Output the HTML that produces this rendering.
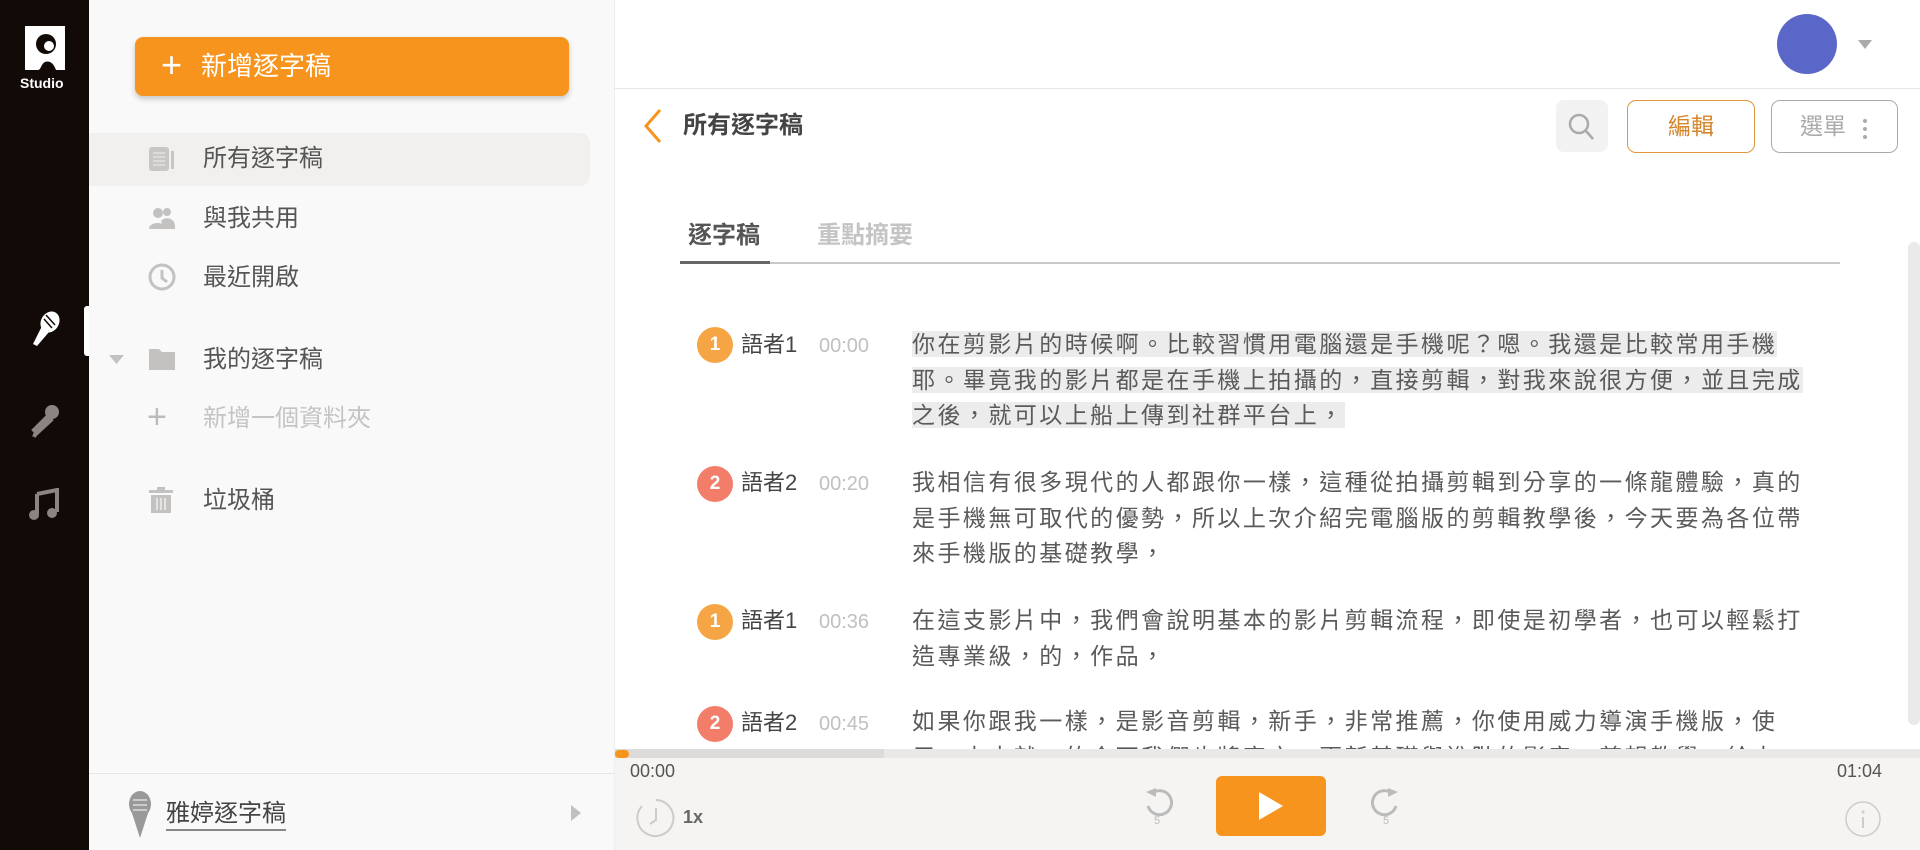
<!DOCTYPE html>
<html><head><meta charset="utf-8"><style>
*{margin:0;padding:0;box-sizing:border-box}
body{width:1920px;height:850px;overflow:hidden;position:relative;background:#fff;font-family:"Liberation Sans","Noto Sans CJK TC",sans-serif;color:#555}
.abs{position:absolute}
#rail{left:0;top:0;width:89px;height:850px;background:#120a06}
#side{left:89px;top:0;width:526px;height:850px;background:#f9f9f9;border-right:1px solid #eee}
.nav{position:absolute;left:203px;font-size:24px;color:#555;line-height:30px}
.tx{position:absolute;left:912px;font-size:23px;letter-spacing:2.45px;line-height:35.5px;color:#5a5a5a;white-space:nowrap}
.hl span{background:#ececec}
.badge{position:absolute;left:697px;width:36px;height:36px;border-radius:50%;color:#fff;font-size:19px;font-weight:bold;text-align:center;line-height:36px}
.spk{position:absolute;left:741px;font-size:22px;color:#444;line-height:30px}
.tm{position:absolute;left:819px;font-size:20px;color:#c0c0c0;line-height:30px}
</style></head><body>
<div id="rail" class="abs">
 <svg class="abs" style="left:22px;top:24px" width="46" height="48" viewBox="0 0 46 48"><path d="M3 2h40v44h-9c-2-6-6-10-11-8-4 2-4 8-7 8H3z" fill="#fff"/><circle cx="24" cy="20" r="10" fill="#120a06"/><circle cx="27" cy="22" r="5" fill="#fff"/></svg>
 <div class="abs" style="left:20px;top:75px;color:#fff;font-size:14px;font-weight:bold">Studio</div>
 <div class="abs" style="left:84px;top:306px;width:5px;height:50px;background:#fff;border-radius:3px 0 0 3px"></div>
 <svg class="abs" style="left:30px;top:310px" width="32" height="38" viewBox="0 0 32 38"><ellipse cx="20" cy="12" rx="9" ry="11" fill="#fff" transform="rotate(30 20 12)"/><path d="M12 16l-9 18 4 2 12-14z" fill="#fff"/><path d="M16 5l9 10M14 9l8 9" stroke="#120a06" stroke-width="1.5"/></svg>
 <svg class="abs" style="left:28px;top:402px" width="34" height="36" viewBox="0 0 34 36"><circle cx="24" cy="10" r="7" fill="#8a8580"/><path d="M20 14l-14 14 3 3 14-13zM9 28l-3 7" stroke="#8a8580" stroke-width="4" fill="#8a8580"/></svg>
 <svg class="abs" style="left:27px;top:488px" width="34" height="34" viewBox="0 0 34 34"><path d="M10 6l20-4v22" stroke="#8a8580" stroke-width="4" fill="none"/><path d="M10 6v20" stroke="#8a8580" stroke-width="4"/><circle cx="7" cy="27" r="5" fill="#8a8580"/><circle cx="25" cy="25" r="5" fill="#8a8580"/></svg>
</div>
<div id="side" class="abs"></div>
<div class="abs" style="left:135px;top:37px;width:434px;height:59px;background:#f7941d;border-radius:8px;box-shadow:0 3px 6px rgba(0,0,0,.2);color:#fff;font-size:26px;line-height:59px"><span style="position:absolute;left:26px;font-size:36px;top:-2px">+</span><span style="position:absolute;left:66px">新增逐字稿</span></div>
<div class="abs" style="left:89px;top:133px;width:501px;height:53px;background:#f1f0ee;border-radius:0 10px 10px 0"></div>
<svg class="abs" style="left:147px;top:145px" width="30" height="28"><rect x="2" y="2" width="20" height="24" rx="3" fill="#c9c7c5"/><rect x="24" y="6" width="3" height="18" fill="#c9c7c5"/><path d="M6 8h12M6 12h12M6 16h12M6 20h12" stroke="#e6e5e3" stroke-width="1.3"/></svg>
<div class="nav" style="top:144px">所有逐字稿</div>
<svg class="abs" style="left:148px;top:205px" width="28" height="26"><circle cx="10" cy="8" r="5" fill="#c4c2c0"/><circle cx="19" cy="7" r="4" fill="#c4c2c0"/><path d="M1 24c0-8 18-8 18 0zM13 16c4-5 14-3 14 5v3h-10z" fill="#c4c2c0"/></svg>
<div class="nav" style="top:204px">與我共用</div>
<svg class="abs" style="left:147px;top:262px" width="30" height="30"><circle cx="15" cy="15" r="12" stroke="#c4c2c0" stroke-width="3" fill="none"/><path d="M15 8v8l5 4" stroke="#c4c2c0" stroke-width="3" fill="none"/></svg>
<div class="nav" style="top:263px">最近開啟</div>
<svg class="abs" style="left:108px;top:354px" width="18" height="12"><path d="M1 1h15l-7.5 9z" fill="#c4c2c0"/></svg>
<svg class="abs" style="left:147px;top:345px" width="30" height="28"><path d="M2 4h10l3 3h13v18H2z" fill="#c4c2c0" rx="3"/></svg>
<div class="nav" style="top:345px">我的逐字稿</div>
<div class="abs" style="left:147px;top:400px;font-size:34px;color:#bbb;line-height:34px">+</div>
<div class="nav" style="top:404px;color:#c4c4c4">新增一個資料夾</div>
<svg class="abs" style="left:147px;top:485px" width="30" height="30"><rect x="2" y="5" width="24" height="3" fill="#c4c2c0"/><rect x="10" y="2" width="8" height="4" fill="#c4c2c0"/><path d="M4 10h20v18H4z" fill="#c4c2c0"/><path d="M10 13v12M14 13v12M18 13v12" stroke="#eee" stroke-width="1.5"/></svg>
<div class="nav" style="top:486px">垃圾桶</div>
<div class="abs" style="left:89px;top:773px;width:526px;height:1px;background:#e6e6e6"></div>
<svg class="abs" style="left:125px;top:790px" width="30" height="50"><ellipse cx="15" cy="14" rx="11" ry="13" fill="#999"/><path d="M6 20l9 28 9-28z" fill="#999"/><path d="M8 10h14M8 15h14M8 20h14" stroke="#ddd" stroke-width="1.5"/></svg>
<div class="abs" style="left:166px;top:799px;font-size:24px;color:#444;border-bottom:2px solid #888;line-height:30px">雅婷逐字稿</div>
<svg class="abs" style="left:570px;top:804px" width="12" height="18"><path d="M1 1l10 8-10 8z" fill="#c0c0c0"/></svg>
<!-- header -->
<div class="abs" style="left:615px;top:88px;width:1305px;height:1px;background:#e6e6e6"></div>
<div class="abs" style="left:1777px;top:14px;width:60px;height:60px;border-radius:50%;background:#5b67c8"></div>
<svg class="abs" style="left:1857px;top:39px" width="16" height="12"><path d="M1 1h14l-7 9z" fill="#aaa"/></svg>
<svg class="abs" style="left:640px;top:108px" width="24" height="36"><path d="M20 2L6 18l14 16" stroke="#f7941d" stroke-width="3" fill="none"/></svg>
<div class="abs" style="left:683px;top:111px;font-size:24px;font-weight:bold;color:#444;line-height:30px">所有逐字稿</div>
<div class="abs" style="left:1556px;top:100px;width:52px;height:52px;background:#f2f2f2;border-radius:8px"></div>
<svg class="abs" style="left:1565px;top:110px" width="34" height="34"><circle cx="14" cy="14" r="9" stroke="#aaa" stroke-width="2.5" fill="none"/><path d="M21 21l7 8" stroke="#aaa" stroke-width="2.5"/></svg>
<div class="abs" style="left:1627px;top:100px;width:128px;height:53px;border:1.5px solid #e0963a;border-radius:9px;color:#d4862a;font-size:23px;text-align:center;line-height:50px">編輯</div>
<div class="abs" style="left:1771px;top:100px;width:127px;height:53px;border:1.5px solid #aaa;border-radius:9px;color:#aaa;font-size:23px;line-height:50px;padding-left:28px">選單<span style="position:absolute;right:30px;top:18px;width:4px;height:4px;border-radius:2px;background:#aaa;box-shadow:0 8px 0 #aaa,0 16px 0 #aaa"></span></div>
<div class="abs" style="left:688px;top:221px;font-size:24px;font-weight:bold;color:#555;line-height:30px">逐字稿</div>
<div class="abs" style="left:817px;top:221px;font-size:24px;font-weight:bold;color:#c4c4c4;line-height:30px">重點摘要</div>
<div class="abs" style="left:680px;top:262px;width:1160px;height:1.5px;background:#c8c8c8"></div>
<div class="abs" style="left:680px;top:261px;width:90px;height:3px;background:#666"></div>
<div class="abs" style="left:1908px;top:242px;width:12px;height:483px;background:#eaeaea;border-radius:6px"></div>
<!-- transcript -->
<div class="badge" style="top:327px;background:#f5a544">1</div><div class="spk" style="top:330px">語者1</div><div class="tm" style="top:331px">00:00</div>
<div class="tx hl" style="top:327px"><span>你在剪影片的時候啊。比較習慣用電腦還是手機呢？嗯。我還是比較常用手機</span><br><span>耶。畢竟我的影片都是在手機上拍攝的，直接剪輯，對我來說很方便，並且完成</span><br><span>之後，就可以上船上傳到社群平台上，</span></div>
<div class="badge" style="top:466px;background:#f27e6a">2</div><div class="spk" style="top:468px">語者2</div><div class="tm" style="top:469px">00:20</div>
<div class="tx" style="top:465px">我相信有很多現代的人都跟你一樣，這種從拍攝剪輯到分享的一條龍體驗，真的<br>是手機無可取代的優勢，所以上次介紹完電腦版的剪輯教學後，今天要為各位帶<br>來手機版的基礎教學，</div>
<div class="badge" style="top:604px;background:#f5a544">1</div><div class="spk" style="top:606px">語者1</div><div class="tm" style="top:607px">00:36</div>
<div class="tx" style="top:603px">在這支影片中，我們會說明基本的影片剪輯流程，即使是初學者，也可以輕鬆打<br>造專業級，的，作品，</div>
<div class="badge" style="top:706px;background:#f27e6a">2</div><div class="spk" style="top:708px">語者2</div><div class="tm" style="top:709px">00:45</div>
<div class="tx" style="top:704px;height:45px;overflow:hidden">如果你跟我一樣，是影音剪輯，新手，非常推薦，你使用威力導演手機版，使<br>用，本來就，的介面我們也將官方，更新基礎與進階的影音，剪輯教學，給大</div>
<!-- player -->
<div class="abs" style="left:615px;top:749px;width:1305px;height:101px;background:#f5f4f2"></div>
<div class="abs" style="left:615px;top:749px;width:1305px;height:9px;background:#eae9e7"></div>
<div class="abs" style="left:615px;top:749px;width:269px;height:9px;background:#dcdbd9"></div>
<div class="abs" style="left:615px;top:750px;width:14px;height:8px;border-radius:4px;background:#f7941d"></div>
<div class="abs" style="left:630px;top:761px;font-size:18px;color:#555">00:00</div>
<div class="abs" style="left:1837px;top:761px;font-size:18px;color:#555">01:04</div>
<svg class="abs" style="left:634px;top:796px" width="44" height="44"><path d="M22 4a18 18 0 1 1-14 6" stroke="#ccc" stroke-width="2" fill="none"/><path d="M22 12v12l-6 4" stroke="#ccc" stroke-width="2" fill="none"/></svg>
<div class="abs" style="left:683px;top:807px;font-size:18px;font-weight:bold;color:#666">1x</div>
<svg class="abs" style="left:1142px;top:786px" width="36" height="40"><path d="M12 6a12 12 0 1 1-6 14" stroke="#bbb" stroke-width="3" fill="none"/><path d="M4 6l10-4v9z" fill="#bbb"/><text x="12" y="38" font-size="11" fill="#bbb" font-family="Liberation Sans">5</text></svg>
<div class="abs" style="left:1216px;top:776px;width:110px;height:60px;background:#f7941d;border-radius:6px"></div>
<svg class="abs" style="left:1256px;top:790px" width="30" height="32"><path d="M3 2l24 14-24 14z" fill="#fff"/></svg>
<svg class="abs" style="left:1366px;top:786px" width="36" height="40"><path d="M24 6a12 12 0 1 0 6 14" stroke="#bbb" stroke-width="3" fill="none"/><path d="M32 6l-10-4v9z" fill="#bbb"/><text x="17" y="38" font-size="11" fill="#bbb" font-family="Liberation Sans">5</text></svg>
<svg class="abs" style="left:1844px;top:800px" width="38" height="38"><circle cx="19" cy="19" r="17" stroke="#ccc" stroke-width="1.5" fill="none"/><circle cx="19" cy="12" r="1.5" fill="#ccc"/><path d="M19 17v11" stroke="#ccc" stroke-width="2"/></svg>
</body></html>
